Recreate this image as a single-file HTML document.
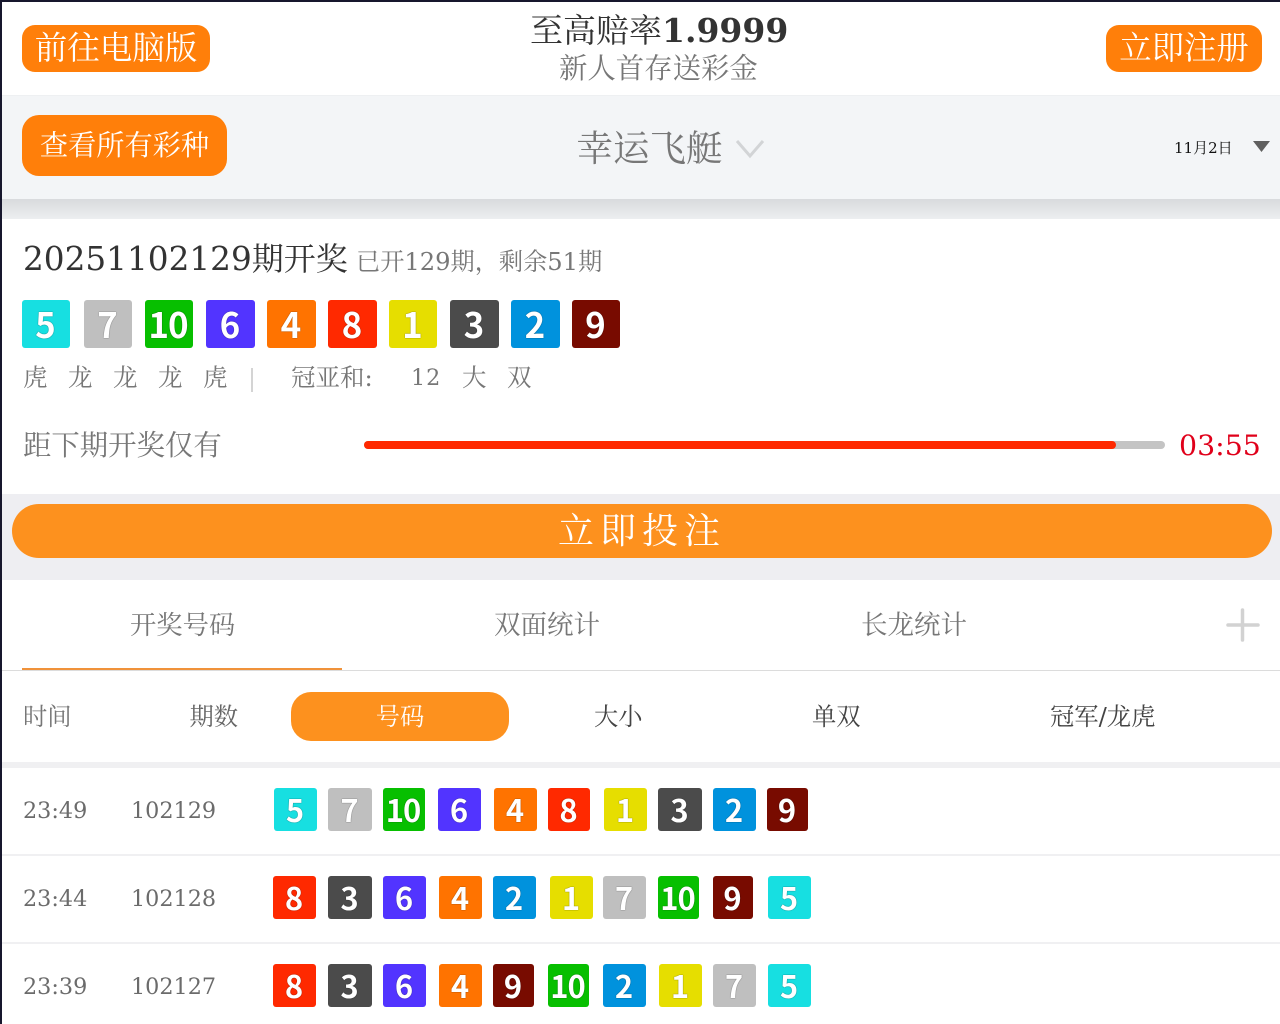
<!DOCTYPE html>
<html lang="zh"><head><meta charset="utf-8"><title>幸运飞艇</title>
<style>
*{box-sizing:border-box;margin:0;padding:0}
html,body{width:1280px;height:1024px;overflow:hidden;background:#fff}
body{position:relative;font-family:"DejaVu Serif","Noto Serif CJK SC",serif;color:#666}
.a{position:absolute;white-space:nowrap}
.btn{position:absolute;background:#ff7f0a;color:#fff;text-align:center;white-space:nowrap}
.b{position:absolute;border-radius:3px;color:#fff;text-align:center;font-family:"Noto Sans CJK SC","Liberation Sans",sans-serif;font-weight:700;text-shadow:0 0 1px rgba(0,0,0,.7);letter-spacing:-1px;text-indent:-2px}
.big{top:300px;height:48px;width:48px;font-size:35px;line-height:47px}
.sm{height:43px;width:43px;font-size:31px;line-height:42px}
.c1{background:#e6de00}.c2{background:#0092dd}.c3{background:#4b4b4b}.c4{background:#ff7300}.c5{background:#17dfe1}
.c6{background:#5234ff}.c7{background:#bfbfbf}.c8{background:#ff2900}.c9{background:#780b00}.c10{background:#07bf00}
.r{font-size:22.300px;color:#6b6b6b;line-height:30px}
.line{position:absolute;left:2px;width:1278px;height:2px;background:#f0f0f2}
</style></head><body>

<!-- header -->
<div class="btn" style="left:22px;top:25px;width:188px;height:47px;border-radius:13px;font-size:32.500px;line-height:47px">前往电脑版</div>
<div class="a" style="left:530px;top:9px;font-size:33px;line-height:44px;color:#333">至高赔率<b style="font-size:33px">1.9999</b></div>
<div class="a" style="left:559px;top:50px;font-size:28.400px;line-height:38px;color:#777">新人首存送彩金</div>
<div class="btn" style="left:1106px;top:25px;width:156px;height:47px;border-radius:13px;font-size:32.400px;line-height:47px">立即注册</div>

<!-- sub header -->
<div class="a" style="left:2px;top:95px;width:1278px;height:104px;background:#f3f5f7;border-top:1px solid #eef0f2"></div>
<div class="a" style="left:2px;top:199px;width:1278px;height:20px;background:linear-gradient(#d8dadd,#eceef0)"></div>
<div class="btn" style="left:22px;top:115px;width:205px;height:61px;border-radius:17px;font-size:28.200px;line-height:62px">查看所有彩种</div>
<div class="a" style="left:576.500px;top:124px;font-size:36.500px;line-height:50px;color:#777">幸运飞艇</div>
<svg class="a" style="left:734px;top:136px" width="32" height="26" viewBox="0 0 32 26"><path d="M3 5 L16 20 L29 5" fill="none" stroke="#d2d4d6" stroke-width="3"/></svg>
<div class="a" style="left:1174px;top:138px;font-size:15px;line-height:20px;color:#111">11月2日</div>
<svg class="a" style="left:1252px;top:140px" width="19" height="13" viewBox="0 0 19 13"><path d="M1 1 H18 L9.500 12 Z" fill="#5f5f5f"/></svg>

<!-- result -->
<div class="a" style="left:23px;top:236px;font-size:32.700px;line-height:46px;color:#333">20251102129<span style="font-size:32px">期开奖</span></div>
<div class="a" style="left:356px;top:245px;font-size:24.200px;line-height:34px;color:#777">已开129期，剩余51期</div>

<div class="b big c5" style="left:22px">5</div>
<div class="b big c7" style="left:84px">7</div>
<div class="b big c10" style="left:145px">10</div>
<div class="b big c6" style="left:206px;width:49px">6</div>
<div class="b big c4" style="left:267px;width:49px">4</div>
<div class="b big c8" style="left:328px;width:49px">8</div>
<div class="b big c1" style="left:389px">1</div>
<div class="b big c3" style="left:450px;width:49px">3</div>
<div class="b big c2" style="left:511px;width:49px">2</div>
<div class="b big c9" style="left:572px">9</div>

<div class="a" style="left:23px;top:361px;font-size:24.500px;line-height:34px;color:#777">虎</div>
<div class="a" style="left:68px;top:361px;font-size:24.500px;line-height:34px;color:#777">龙</div>
<div class="a" style="left:113px;top:361px;font-size:24.500px;line-height:34px;color:#777">龙</div>
<div class="a" style="left:158px;top:361px;font-size:24.500px;line-height:34px;color:#777">龙</div>
<div class="a" style="left:203px;top:361px;font-size:24.500px;line-height:34px;color:#777">虎</div>
<div class="a" style="left:251px;top:368px;width:2px;height:24px;background:#d4d4d4"></div>
<div class="a" style="left:291px;top:361px;font-size:24.500px;line-height:34px;color:#777">冠亚和:</div>
<div class="a" style="left:411px;top:361px;font-size:22.300px;line-height:34px;color:#777;letter-spacing:1px">12</div>
<div class="a" style="left:462px;top:361px;font-size:24.500px;line-height:34px;color:#777">大</div>
<div class="a" style="left:507px;top:361px;font-size:24.500px;line-height:34px;color:#777">双</div>

<div class="a" style="left:23px;top:427px;font-size:28.400px;line-height:38px;color:#777">距下期开奖仅有</div>
<div class="a" style="left:364px;top:441px;width:801px;height:8px;border-radius:4px;background:#c4c4c4"></div>
<div class="a" style="left:364px;top:441px;width:752px;height:8px;border-radius:4px;background:#ff2900"></div>
<div class="a" style="left:1179px;top:427px;font-size:28.400px;line-height:38px;color:#e0001a">03:55</div>

<!-- bet -->
<div class="a" style="left:2px;top:494px;width:1278px;height:86px;background:#eeeef2"></div>
<div class="btn" style="left:12px;top:504px;width:1260px;height:54px;border-radius:27px;background:#fd911e;font-size:36px;line-height:56px;letter-spacing:6px">立即投注</div>

<!-- tabs -->
<div class="a" style="left:130px;top:608px;font-size:26.300px;line-height:36px;color:#777">开奖号码</div>
<div class="a" style="left:494px;top:608px;font-size:26.500px;line-height:36px;color:#777">双面统计</div>
<div class="a" style="left:861px;top:608px;font-size:26.500px;line-height:36px;color:#777">长龙统计</div>
<svg class="a" style="left:1226px;top:608px" width="34" height="34" viewBox="0 0 34 34"><path d="M16.500 2 V32 M2 17 H32" stroke="#d2d2d2" stroke-width="3.500" fill="none" stroke-linecap="round"/></svg>
<div class="a" style="left:2px;top:670px;width:1278px;height:1px;background:#dcdcdc"></div>
<div class="a" style="left:22px;top:668px;width:320px;height:2px;background:#f0923a"></div>

<div class="a" style="left:23px;top:700px;font-size:24.300px;line-height:34px;color:#777">时间</div>
<div class="a" style="left:189.500px;top:700px;font-size:24.300px;line-height:34px;color:#666">期数</div>
<div class="btn" style="left:291px;top:692px;width:218px;height:49px;border-radius:20px;background:#fd911e;font-size:24.300px;line-height:49px">号码</div>
<div class="a" style="left:594px;top:700px;font-size:24.300px;line-height:34px;color:#444">大小</div>
<div class="a" style="left:812px;top:700px;font-size:24.300px;line-height:34px;color:#444">单双</div>
<div class="a" style="left:1050px;top:700px;font-size:24.300px;line-height:34px;color:#444">冠军/龙虎</div>
<div class="a" style="left:2px;top:762px;width:1278px;height:6px;background:#f0f0f2"></div>

<!-- rows -->
<div class="a r" style="left:23px;top:796px">23:49</div>
<div class="a r" style="left:131px;top:796px">102129</div>
<div class="b sm c5" style="left:274px;top:788px">5</div>
<div class="b sm c7" style="left:328px;top:788px;width:44px">7</div>
<div class="b sm c10" style="left:383px;top:788px;width:42px">10</div>
<div class="b sm c6" style="left:438px;top:788px">6</div>
<div class="b sm c4" style="left:494px;top:788px">4</div>
<div class="b sm c8" style="left:548px;top:788px;width:42px">8</div>
<div class="b sm c1" style="left:604px;top:788px">1</div>
<div class="b sm c3" style="left:658px;top:788px;width:44px">3</div>
<div class="b sm c2" style="left:713px;top:788px">2</div>
<div class="b sm c9" style="left:767px;top:788px;width:41px">9</div>
<div class="line" style="top:854px"></div>

<div class="a r" style="left:23px;top:884px">23:44</div>
<div class="a r" style="left:131px;top:884px">102128</div>
<div class="b sm c8" style="left:273px;top:876px">8</div>
<div class="b sm c3" style="left:328px;top:876px;width:44px">3</div>
<div class="b sm c6" style="left:383px;top:876px">6</div>
<div class="b sm c4" style="left:439px;top:876px">4</div>
<div class="b sm c2" style="left:493px;top:876px">2</div>
<div class="b sm c1" style="left:550px;top:876px">1</div>
<div class="b sm c7" style="left:603px;top:876px">7</div>
<div class="b sm c10" style="left:658px;top:876px;width:41px">10</div>
<div class="b sm c9" style="left:713px;top:876px;width:40px">9</div>
<div class="b sm c5" style="left:768px;top:876px">5</div>
<div class="line" style="top:942px"></div>

<div class="a r" style="left:23px;top:972px">23:39</div>
<div class="a r" style="left:131px;top:972px">102127</div>
<div class="b sm c8" style="left:273px;top:964px">8</div>
<div class="b sm c3" style="left:328px;top:964px;width:44px">3</div>
<div class="b sm c6" style="left:383px;top:964px">6</div>
<div class="b sm c4" style="left:439px;top:964px">4</div>
<div class="b sm c9" style="left:493px;top:964px;width:41px">9</div>
<div class="b sm c10" style="left:548px;top:964px;width:41px">10</div>
<div class="b sm c2" style="left:603px;top:964px">2</div>
<div class="b sm c1" style="left:659px;top:964px">1</div>
<div class="b sm c7" style="left:713px;top:964px">7</div>
<div class="b sm c5" style="left:768px;top:964px">5</div>

<!-- frame -->
<div class="a" style="left:0;top:0;width:1280px;height:2px;background:#17172d"></div>
<div class="a" style="left:0;top:0;width:2px;height:1024px;background:#17172d"></div>
</body></html>
